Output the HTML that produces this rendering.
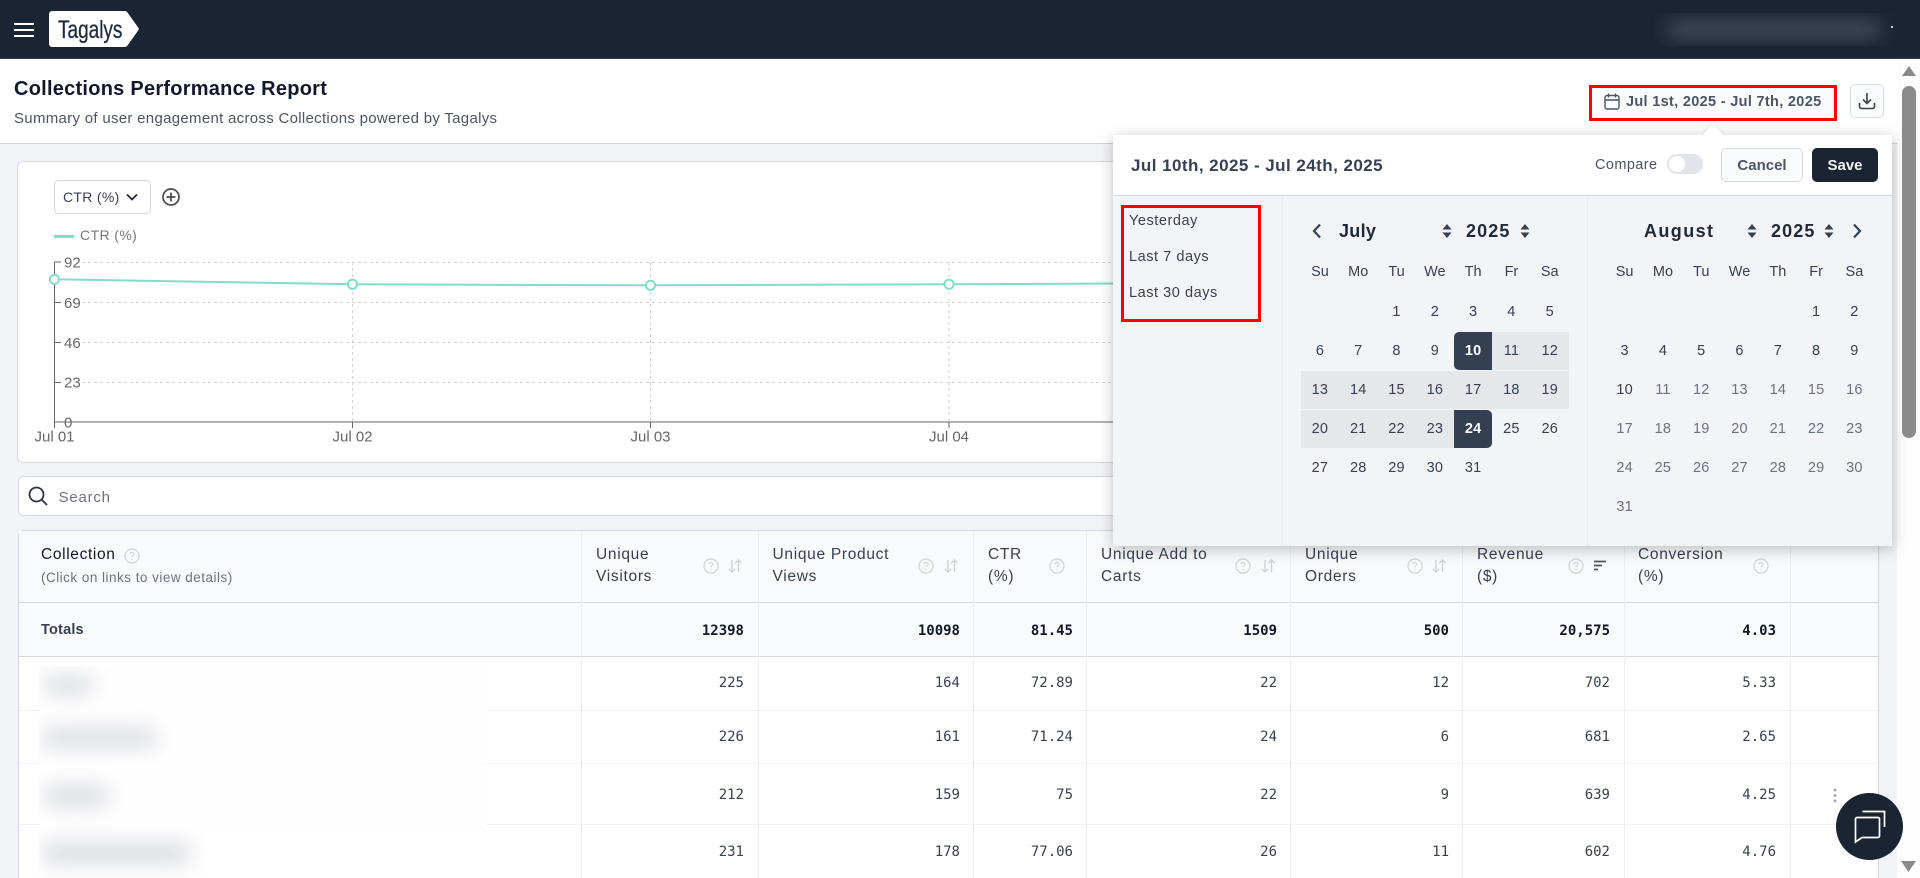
<!DOCTYPE html>
<html lang="en"><head><meta charset="utf-8"><title>Collections Performance Report</title>
<style>
*{box-sizing:border-box}
html,body{margin:0;padding:0;width:1920px;height:878px;overflow:hidden;background:#f3f4f7;font-family:"Liberation Sans",sans-serif;color:#374151}
#p{position:relative;width:1920px;height:878px;overflow:hidden}
.a{position:absolute}
.t{position:absolute;white-space:nowrap;line-height:20px;font-size:14px}
.h{position:absolute;white-space:nowrap;font-size:15.5px;line-height:22px;color:#374151;letter-spacing:.7px;top:544px}
.n{position:absolute;white-space:nowrap;text-align:right;font-family:"DejaVu Sans Mono",monospace;font-size:14px;line-height:20px;color:#374151;width:80px}
.b{font-weight:700;color:#111827}
.vl{position:absolute;width:1px;top:531px;height:347px;background:#eceef2}
.hl{position:absolute;left:19px;width:1859px;height:1px;background:#f1f2f5}
.cal{position:absolute;top:293px;width:268.1px;display:grid;grid-template-columns:repeat(7,38.3px);grid-auto-rows:38px;row-gap:1px;font-size:14.5px;letter-spacing:.2px;color:#374151}
.cal span{display:flex;align-items:center;justify-content:center}
.wk{position:absolute;top:262px;width:268.1px;display:grid;grid-template-columns:repeat(7,38.3px);font-size:14.5px;line-height:20px;color:#374151;text-align:center}
.r{background:#e5e7eb}
.s1,.s2{background:#343f52;color:#fff;font-weight:600}
.s1{border-radius:5px 0 0 5px}.s2{border-radius:0 5px 5px 0}
.m{color:#6b7280}
svg.i{position:absolute;overflow:visible}
</style></head><body><div id="p">

<svg width="0" height="0" style="position:absolute"><defs>
<symbol id="help" viewBox="0 0 16 16"><circle cx="8" cy="8" r="7" fill="none" stroke="#d4d7dd" stroke-width="1.4"/><path d="M6 6.3c0-1.2.9-1.9 2-1.9s2 .7 2 1.7c0 1.5-2 1.5-2 3" fill="none" stroke="#d4d7dd" stroke-width="1.2"/><circle cx="8" cy="11.3" r=".8" fill="#d4d7dd"/></symbol>
<symbol id="sort" viewBox="0 0 16 16"><path d="M5 2v12M1.8 10.8 5 14l3.200-3.200M11.500 14V2M8.300 5.200 11.500 2l3.200 3.200" fill="none" stroke="#cdd0d6" stroke-width="1.3"/></symbol>
<symbol id="ud" viewBox="0 0 10 16"><path d="M5 1 9.500 6.500H.5zM5 15 .5 9.500h9z" fill="#374151"/></symbol>
</defs></svg>

<!-- top bar -->
<div class="a" style="left:0;top:0;width:1920px;height:59px;background:#1a2433;border-bottom:1px solid #333e4e"></div>
<div class="a" style="left:14px;top:23px;width:20px;height:2px;background:#fff"></div>
<div class="a" style="left:14px;top:29px;width:20px;height:2px;background:#fff"></div>
<div class="a" style="left:14px;top:35px;width:20px;height:2px;background:#fff"></div>
<svg class="i" style="left:49px;top:11px" width="90" height="36"><path d="M3 0H76Q77.500 0 78.500 1.500L89.500 17Q90 18 89.500 19L78.500 34.500Q77.500 36 76 36H3a3 3 0 0 1-3-3V3a3 3 0 0 1 3-3z" fill="#fff"/></svg>
<div class="t" style="left:57.500px;top:17.500px;font-size:25px;line-height:25px;color:#1f2b3b;transform:scaleX(.76);transform-origin:0 0;-webkit-text-stroke:.3px #1f2b3b">Tagalys</div>
<div class="a" style="left:1655px;top:13px;width:237px;height:33px;overflow:hidden;background:#1c2634"><div class="a" style="left:14px;top:9px;width:209px;height:15px;background:#4a5361;filter:blur(9px)"></div></div>
<div class="a" style="left:1891px;top:26px;width:2px;height:2px;background:#cfd2d6"></div>

<!-- page head -->
<div class="a" style="left:0;top:59px;width:1897px;height:85px;background:#fff;border-bottom:1px solid #d1d5db"></div>
<div class="a" style="left:1897px;top:59px;width:23px;height:819px;background:#fdfdfd"></div>
<div class="t" style="left:14px;top:79px;font-size:20px;font-weight:700;color:#111827;letter-spacing:.25px">Collections Performance Report</div>
<div class="t" style="left:14px;top:109px;font-size:15px;color:#4b5563;letter-spacing:.3px">Summary of user engagement across Collections powered by Tagalys</div>

<!-- date button -->
<div class="a" style="left:1589px;top:85px;width:248px;height:36px;border:3px solid #f00;background:#fafbfc"></div>
<svg class="i" style="left:1604px;top:93px" width="16" height="17" viewBox="0 0 16 17" fill="none" stroke="#4b5563" stroke-width="1.4"><rect x="1" y="2.500" width="14" height="13.500" rx="2"/><path d="M1 7h14M4.500 .5v4M11.500 .5v4"/></svg>
<div class="t" style="left:1626px;top:91.500px;font-size:14.500px;font-weight:700;color:#4b5563;letter-spacing:.32px">Jul 1st, 2025 - Jul 7th, 2025</div>
<div class="a" style="left:1850px;top:84px;width:34px;height:34px;border:1px solid #d8dbe0;border-radius:5px;background:#fafbfc"></div>
<svg class="i" style="left:1858px;top:92px" width="18" height="18" viewBox="0 0 18 18" fill="none" stroke="#374151" stroke-width="1.6"><path d="M9 1v10M5 7.500 9 11.500l4-4M1.500 11v3.500a2 2 0 0 0 2 2h11a2 2 0 0 0 2-2V11"/></svg>

<!-- chart card -->
<div class="a" style="left:17px;top:161px;width:1861px;height:302px;background:#fff;border:1px solid #d4d7dd;border-radius:6px"></div>
<div class="a" style="left:54px;top:180px;width:97px;height:34px;background:#fff;border:1px solid #d4d7dd;border-radius:5px"></div>
<div class="t" style="left:63px;top:187px;font-size:14px;color:#374151;letter-spacing:.3px">CTR (%)</div>
<svg class="i" style="left:126px;top:193px" width="12" height="8" viewBox="0 0 12 8" fill="none" stroke="#1f2937" stroke-width="1.7"><path d="M1 1.500 6 6.500l5-5"/></svg>
<svg class="i" style="left:162px;top:188px" width="18" height="18" viewBox="0 0 18 18" fill="none" stroke="#4b4b4b" stroke-width="1.700"><circle cx="9" cy="9" r="8"/><path d="M9 4.500v9M4.500 9h9"/></svg>
<div class="a" style="left:54px;top:235px;width:20px;height:3px;background:#82dcca"></div>
<div class="t" style="left:80px;top:225px;font-size:14px;color:#777;letter-spacing:.4px">CTR (%)</div>

<svg class="a" style="left:0;top:0" width="1920" height="878">
<g stroke="#d2d2d2" stroke-dasharray="3 3" fill="none">
<path d="M82 262.500H1200M82 302.500H1200M82 342.500H1200M82 382.500H1200"/>
<path d="M352.500 262V422M650.500 262V422M949 262V422"/>
</g>
<path d="M54.500 262V428M54.500 262H61M54.500 302.500H61M54.500 342.500H61M54.500 382.500H61M54.500 422H1200M352.500 422V428M650.500 422V428M949 422V428" stroke="#666" fill="none"/>
<polyline points="54.500,279.300 352.500,284.300 650.500,285.300 949,284.300 1247,282.800" fill="none" stroke="#82dcca" stroke-width="2"/>
<g fill="#fff" stroke="#82dcca" stroke-width="2">
<circle cx="54.500" cy="279.300" r="4.600"/><circle cx="352.500" cy="284.300" r="4.600"/><circle cx="650.500" cy="285.300" r="4.600"/><circle cx="949" cy="284.300" r="4.600"/>
</g>
<g font-family="Liberation Sans, sans-serif" font-size="15" fill="#666">
<text x="64" y="267.500">92</text><text x="64" y="308">69</text><text x="64" y="348">46</text><text x="64" y="387.500">23</text><text x="64" y="427.500">0</text>
<text x="54.500" y="441.500" text-anchor="middle">Jul 01</text><text x="352.500" y="441.500" text-anchor="middle">Jul 02</text><text x="650.500" y="441.500" text-anchor="middle">Jul 03</text><text x="949" y="441.500" text-anchor="middle">Jul 04</text>
</g>
</svg>

<!-- search -->
<div class="a" style="left:18px;top:476px;width:1860px;height:40px;background:#fff;border:1px solid #d4d7dd;border-radius:5px"></div>
<svg class="i" style="left:28px;top:486px" width="20" height="20" viewBox="0 0 20 20" fill="none" stroke="#2b3545" stroke-width="1.800"><circle cx="8.500" cy="8.500" r="7"/><path d="M13.500 13.500 19 19"/></svg>
<div class="t" style="left:58.500px;top:487.500px;font-size:15px;color:#6b7280;letter-spacing:.8px">Search</div>

<!-- table -->
<div class="a" style="left:18px;top:530px;width:1861px;height:360px;background:#fff;border:1px solid #d4d7dd;border-radius:6px 6px 0 0"></div>
<div class="a" style="left:19px;top:531px;width:1859px;height:71px;background:#f9fafb"></div>
<div class="a" style="left:19px;top:603px;width:1859px;height:53px;background:#f9fafb"></div>
<div class="a" style="left:19px;top:602px;width:1859px;height:1px;background:#d4d7dd"></div>
<div class="a" style="left:19px;top:656px;width:1859px;height:1px;background:#d4d7dd"></div>
<div class="hl" style="top:710px"></div><div class="hl" style="top:763px"></div><div class="hl" style="top:824px"></div>
<div class="vl" style="left:581px"></div><div class="vl" style="left:758px"></div><div class="vl" style="left:973px"></div><div class="vl" style="left:1086px"></div><div class="vl" style="left:1290px"></div><div class="vl" style="left:1462px"></div><div class="vl" style="left:1624px"></div><div class="vl" style="left:1790px"></div>

<div class="t" style="left:41px;top:544.500px;font-size:15.500px;color:#111827;letter-spacing:.65px">Collection</div>
<svg class="i" style="left:124px;top:548px" width="16" height="16"><use href="#help"/></svg>
<div class="t" style="left:41px;top:568px;font-size:13.500px;color:#6b7280;letter-spacing:.48px">(Click on links to view details)</div>

<div class="h" style="left:596px">Unique<br>Visitors</div>
<svg class="i" style="left:703px;top:558px" width="16" height="16"><use href="#help"/></svg><svg class="i" style="left:727px;top:558px" width="16" height="16"><use href="#sort"/></svg>
<div class="h" style="left:772.500px">Unique Product<br>Views</div>
<svg class="i" style="left:918px;top:558px" width="16" height="16"><use href="#help"/></svg><svg class="i" style="left:943px;top:558px" width="16" height="16"><use href="#sort"/></svg>
<div class="h" style="left:988px">CTR<br>(%)</div>
<svg class="i" style="left:1049px;top:558px" width="16" height="16"><use href="#help"/></svg>
<div class="h" style="left:1101px">Unique Add to<br>Carts</div>
<svg class="i" style="left:1235px;top:558px" width="16" height="16"><use href="#help"/></svg><svg class="i" style="left:1260px;top:558px" width="16" height="16"><use href="#sort"/></svg>
<div class="h" style="left:1305px">Unique<br>Orders</div>
<svg class="i" style="left:1407px;top:558px" width="16" height="16"><use href="#help"/></svg><svg class="i" style="left:1431px;top:558px" width="16" height="16"><use href="#sort"/></svg>
<div class="h" style="left:1477px">Revenue<br>($)</div>
<svg class="i" style="left:1568px;top:558px" width="16" height="16"><use href="#help"/></svg>
<svg class="i" style="left:1593px;top:560px" width="14" height="12" viewBox="0 0 14 12" fill="none" stroke="#4b5563" stroke-width="1.700"><path d="M1 1.500H13M1 5.500H9M1 9.500H5"/></svg>
<div class="h" style="left:1638px">Conversion<br>(%)</div>
<svg class="i" style="left:1753px;top:558px" width="16" height="16"><use href="#help"/></svg>

<!-- totals -->
<div class="t" style="left:41px;top:620px;font-size:14.500px;font-weight:700;color:#374151;letter-spacing:.2px">Totals</div>
<div class="n b" style="left:664px;top:620.500px">12398</div><div class="n b" style="left:880px;top:620.500px">10098</div><div class="n b" style="left:993px;top:620.500px">81.45</div><div class="n b" style="left:1197px;top:620.500px">1509</div><div class="n b" style="left:1369px;top:620.500px">500</div><div class="n b" style="left:1530px;top:620.500px">20,575</div><div class="n b" style="left:1696px;top:620.500px">4.03</div>
<!-- rows -->
<div class="n" style="left:664px;top:673px">225</div><div class="n" style="left:880px;top:673px">164</div><div class="n" style="left:993px;top:673px">72.89</div><div class="n" style="left:1197px;top:673px">22</div><div class="n" style="left:1369px;top:673px">12</div><div class="n" style="left:1530px;top:673px">702</div><div class="n" style="left:1696px;top:673px">5.33</div>
<div class="n" style="left:664px;top:727px">226</div><div class="n" style="left:880px;top:727px">161</div><div class="n" style="left:993px;top:727px">71.24</div><div class="n" style="left:1197px;top:727px">24</div><div class="n" style="left:1369px;top:727px">6</div><div class="n" style="left:1530px;top:727px">681</div><div class="n" style="left:1696px;top:727px">2.65</div>
<div class="n" style="left:664px;top:785px">212</div><div class="n" style="left:880px;top:785px">159</div><div class="n" style="left:993px;top:785px">75</div><div class="n" style="left:1197px;top:785px">22</div><div class="n" style="left:1369px;top:785px">9</div><div class="n" style="left:1530px;top:785px">639</div><div class="n" style="left:1696px;top:785px">4.25</div>
<div class="n" style="left:664px;top:842px">231</div><div class="n" style="left:880px;top:842px">178</div><div class="n" style="left:993px;top:842px">77.06</div><div class="n" style="left:1197px;top:842px">26</div><div class="n" style="left:1369px;top:842px">11</div><div class="n" style="left:1530px;top:842px">602</div><div class="n" style="left:1696px;top:842px">4.76</div>

<!-- blurred names -->
<div class="a" style="left:39px;top:666px;width:447px;height:164px;background:#fefefe"></div>
<div class="a" style="left:39px;top:830px;width:170px;height:48px;background:#fefefe"></div>
<div class="a" style="left:39px;top:666px;width:170px;height:212px;overflow:hidden">
<div class="a" style="left:6px;top:11px;width:46px;height:16px;background:#d6d8de;filter:blur(10px)"></div>
<div class="a" style="left:4px;top:63px;width:112px;height:18px;background:#d8dae0;filter:blur(10px)"></div>
<div class="a" style="left:6px;top:121px;width:62px;height:18px;background:#d6d8de;filter:blur(10px)"></div>
<div class="a" style="left:4px;top:177px;width:146px;height:20px;background:#d8dae0;filter:blur(10px)"></div>
</div>

<svg class="i" style="left:1833px;top:788px" width="4" height="15"><circle cx="2" cy="2" r="1.500" fill="#a2a9b8"/><circle cx="2" cy="7.500" r="1.500" fill="#a2a9b8"/><circle cx="2" cy="13" r="1.500" fill="#a2a9b8"/></svg>

<!-- popover -->
<div class="a" style="left:1705px;top:127px;width:16px;height:16px;background:#fff;transform:rotate(45deg);box-shadow:-1px -1px 3px rgba(0,0,0,.08)"></div>
<div class="a" style="left:1113px;top:135px;width:779px;height:411px;background:#f3f4f8;box-shadow:0 3px 14px rgba(0,0,0,.25)"></div>
<div class="a" style="left:1705px;top:128px;width:16px;height:16px;background:#fff;transform:rotate(45deg)"></div>
<div class="a" style="left:1113px;top:135px;width:779px;height:61px;background:#fff;border-bottom:1px solid #d8dbe0"></div>
<div class="a" style="left:1282px;top:196px;width:1px;height:350px;background:#e9ebef"></div>
<div class="a" style="left:1587px;top:196px;width:1px;height:350px;background:#e9ebef"></div>
<div class="t" style="left:1131px;top:155.500px;font-size:17px;font-weight:700;color:#374151;letter-spacing:.45px">Jul 10th, 2025 - Jul 24th, 2025</div>
<div class="t" style="left:1595px;top:154.500px;font-size:14.500px;color:#4b5563;letter-spacing:.4px">Compare</div>
<div class="a" style="left:1667px;top:154px;width:36px;height:20px;border-radius:10px;background:#e1e4e9"></div>
<div class="a" style="left:1669px;top:156px;width:16px;height:16px;border-radius:8px;background:#fff"></div>
<div class="a" style="left:1721px;top:148px;width:82px;height:34px;border:1px solid #d4d7dd;border-radius:5px;background:#fafbfc;text-align:center;font-size:15px;line-height:33px;font-weight:700;color:#4b5563">Cancel</div>
<div class="a" style="left:1812px;top:148px;width:66px;height:34px;border-radius:5px;background:#1a2433;text-align:center;font-size:15px;line-height:35px;font-weight:700;color:#f1f3f5">Save</div>

<div class="a" style="left:1121px;top:205px;width:140px;height:117px;border:3px solid #f00"></div>
<div class="t" style="left:1129px;top:211px;font-size:14.500px;letter-spacing:.55px">Yesterday</div>
<div class="t" style="left:1129px;top:247px;font-size:14.500px;letter-spacing:.55px">Last 7 days</div>
<div class="t" style="left:1129px;top:283px;font-size:14.500px;letter-spacing:.55px">Last 30 days</div>

<svg class="i" style="left:1312px;top:223px" width="10" height="16" viewBox="0 0 10 16" fill="none" stroke="#374151" stroke-width="2.200"><path d="M8 1.500 2 8l6 6.500"/></svg>
<svg class="i" style="left:1852px;top:223px" width="10" height="16" viewBox="0 0 10 16" fill="none" stroke="#374151" stroke-width="2.200"><path d="M2 1.500 8 8l-6 6.500"/></svg>
<div class="t" style="left:1339px;top:221px;font-size:18px;font-weight:700;color:#1f2937;letter-spacing:.3px">July</div>
<div class="t" style="left:1466px;top:221px;font-size:18px;font-weight:700;color:#1f2937;letter-spacing:1.1px">2025</div>
<div class="t" style="left:1644px;top:221px;font-size:18px;font-weight:700;color:#1f2937;letter-spacing:1.4px">August</div>
<div class="t" style="left:1771px;top:221px;font-size:18px;font-weight:700;color:#1f2937;letter-spacing:1.1px">2025</div>
<svg class="i" style="left:1442px;top:223px" width="10" height="16"><use href="#ud"/></svg>
<svg class="i" style="left:1520px;top:223px" width="10" height="16"><use href="#ud"/></svg>
<svg class="i" style="left:1747px;top:223px" width="10" height="16"><use href="#ud"/></svg>
<svg class="i" style="left:1824px;top:223px" width="10" height="16"><use href="#ud"/></svg>

<div class="wk" style="left:1300.800px"><span>Su</span><span>Mo</span><span>Tu</span><span>We</span><span>Th</span><span>Fr</span><span>Sa</span></div>
<div class="wk" style="left:1605.500px"><span>Su</span><span>Mo</span><span>Tu</span><span>We</span><span>Th</span><span>Fr</span><span>Sa</span></div>

<div class="cal" style="left:1300.800px">
<span></span><span></span><span>1</span><span>2</span><span>3</span><span>4</span><span>5</span>
<span>6</span><span>7</span><span>8</span><span>9</span><span class="s1">10</span><span class="r">11</span><span class="r">12</span>
<span class="r">13</span><span class="r">14</span><span class="r">15</span><span class="r">16</span><span class="r">17</span><span class="r">18</span><span class="r">19</span>
<span class="r">20</span><span class="r">21</span><span class="r">22</span><span class="r">23</span><span class="s2">24</span><span>25</span><span>26</span>
<span>27</span><span>28</span><span>29</span><span>30</span><span>31</span>
</div>
<div class="cal" style="left:1605.500px">
<span></span><span></span><span></span><span></span><span></span><span>1</span><span>2</span>
<span>3</span><span>4</span><span>5</span><span>6</span><span>7</span><span>8</span><span>9</span>
<span>10</span><span class="m">11</span><span class="m">12</span><span class="m">13</span><span class="m">14</span><span class="m">15</span><span class="m">16</span>
<span class="m">17</span><span class="m">18</span><span class="m">19</span><span class="m">20</span><span class="m">21</span><span class="m">22</span><span class="m">23</span>
<span class="m">24</span><span class="m">25</span><span class="m">26</span><span class="m">27</span><span class="m">28</span><span class="m">29</span><span class="m">30</span>
<span class="m">31</span>
</div>

<!-- scrollbar -->
<svg class="i" style="left:1902px;top:66px" width="14" height="10"><path d="M7 0 14 10H0z" fill="#8a8a8a"/></svg>
<div class="a" style="left:1902px;top:86px;width:14px;height:352px;border-radius:7px;background:#8a8a8a"></div>
<svg class="i" style="left:1901px;top:861px" width="15" height="11"><path d="M0 0H15L7.500 11z" fill="#8a8a8a"/></svg>

<!-- chat -->
<div class="a" style="left:1836px;top:793px;width:67px;height:67px;border-radius:50%;background:#1a2433"></div>
<svg class="i" style="left:1850px;top:808px" width="38" height="36" viewBox="0 0 38 36" fill="none" stroke="#fff" stroke-width="1.700"><path d="M12.500 3.500H34.500V19"/><path d="M7 9.500H28a1.500 1.500 0 0 1 1.500 1.500V28a1.500 1.500 0 0 1-1.500 1.500H12L5.500 34V11A1.500 1.500 0 0 1 7 9.500z"/></svg>
</div></body></html>
